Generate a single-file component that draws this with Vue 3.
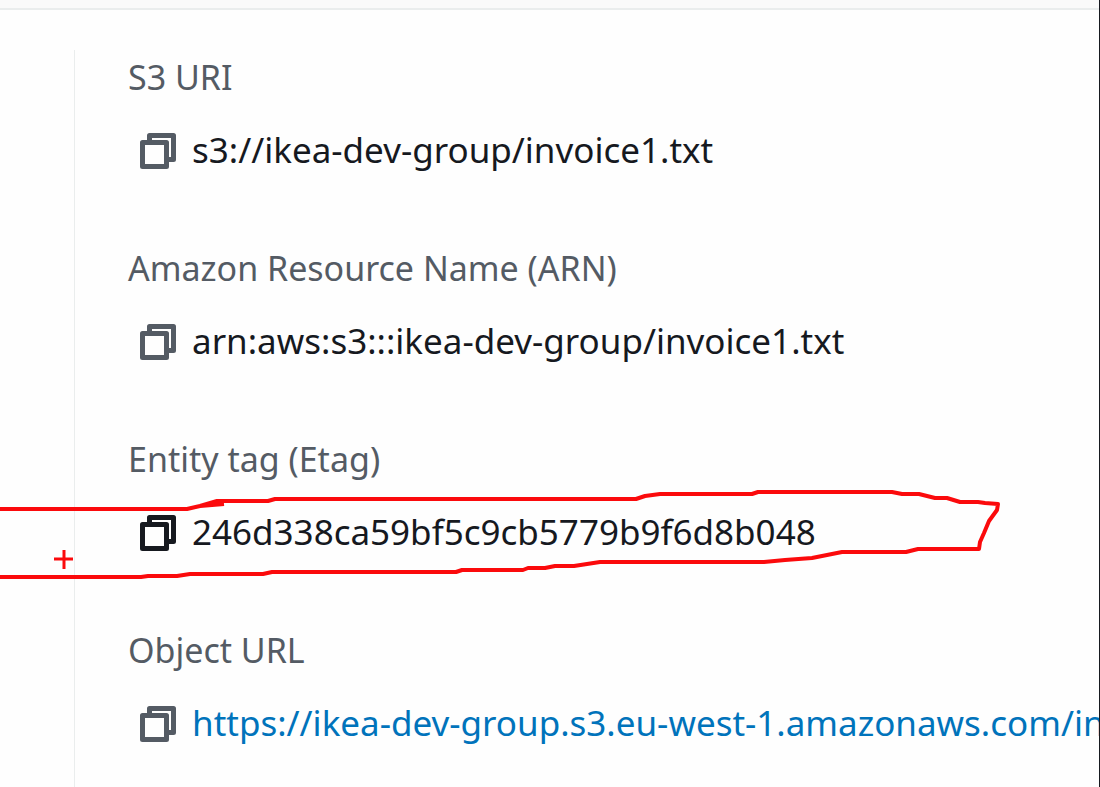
<script setup>
const items = [
  { label: 'S3 URI', value: 's3://ikea-dev-group/invoice1.txt' },
  { label: 'Amazon Resource Name (ARN)', value: 'arn:aws:s3:::ikea-dev-group/invoice1.txt' },
  { label: 'Entity tag (Etag)', value: '246d338ca59bf5c9cb5779b9f6d8b048', active: true },
  {
    label: 'Object URL',
    value: 'https://ikea-dev-group.s3.eu-west-1.amazonaws.com/invoice1.txt',
    href: 'https://ikea-dev-group.s3.eu-west-1.amazonaws.com/invoice1.txt',
  },
]
</script>

<template>
  <main class="page">
    <div class="topbar"></div>
    <section class="details">
      <dl class="list">
        <div v-for="item in items" :key="item.label" class="item">
          <dt class="label">{{ item.label }}</dt>
          <dd class="row">
            <button class="copy" :class="{ active: item.active }" type="button" :aria-label="'Copy ' + item.label">
              <svg width="38" height="38" viewBox="0 0 38 38" fill="none" stroke="currentColor" stroke-width="5" stroke-linejoin="round">
                <path d="M10.500 11V4.500H34.500V28.500H28" />
                <rect x="3.500" y="11.500" width="24" height="24" />
              </svg>
            </button>
            <a v-if="item.href" class="value link" :href="item.href">{{ item.value }}</a>
            <span v-else class="value">{{ item.value }}</span>
          </dd>
        </div>
      </dl>
    </section>
    <svg class="markup" width="1100" height="100" viewBox="0 485 1100 100" fill="none" stroke="#fb0a0c" stroke-width="4" stroke-linejoin="round" aria-hidden="true">
      <path d="M0 509H187L200 506L224 504M200 506L217 501H268L275 499H636L645 496L660 494H752L758 492H892L902 494H919L935 498H947L960 502H978L985 503L998 504L997 510L989 521L984 533L980 542L979 549H918L906 552H842L812 558L785 560L764 562H600L574 566H555L545 568H528L523 570H462L456 572H272L263 574H190L177 576H148L141 577H0" />
      <path d="M54 559H73M64 550V569" stroke-width="3" />
    </svg>
  </main>
</template>

<style>
body {
  margin: 0;
  background: #fefefe;
}
</style>

<style scoped>
.page {
  position: relative;
  box-sizing: border-box;
  height: 100vh;
  overflow: hidden;
  display: flex;
  flex-direction: column;
  border-right: 1px solid #16191f;
  font-family: "Noto Sans", "Open Sans", sans-serif;
}
.topbar {
  flex: none;
  height: 8px;
  background: #fafafa;
  border-bottom: 2px solid #eaeded;
}
.details {
  flex: 1;
  margin: 40px 0 0 74px;
  padding: 5px 0 0 53px;
  border-left: 1px solid #eaeded;
}
.list {
  display: flex;
  flex-direction: column;
  gap: 74px;
  margin: 0;
}
.item {
  display: flex;
  flex-direction: column;
  gap: 29px;
}
.label,
.value {
  line-height: 44px;
  white-space: nowrap;
}
.label {
  font-size: 34px;
  color: #545b64;
}
.value {
  font-size: 35px;
  color: #16191f;
}
.row {
  display: flex;
  align-items: center;
  gap: 15px;
  margin: 0 0 0 11px;
}
.copy {
  flex: none;
  display: flex;
  padding: 0;
  border: 0;
  background: none;
  color: #545b64;
  cursor: pointer;
}
.copy.active {
  color: #16191f;
}
.link {
  color: #0073bb;
  text-decoration: none;
}
.markup {
  position: absolute;
  left: 0;
  top: 485px;
  pointer-events: none;
}
</style>
